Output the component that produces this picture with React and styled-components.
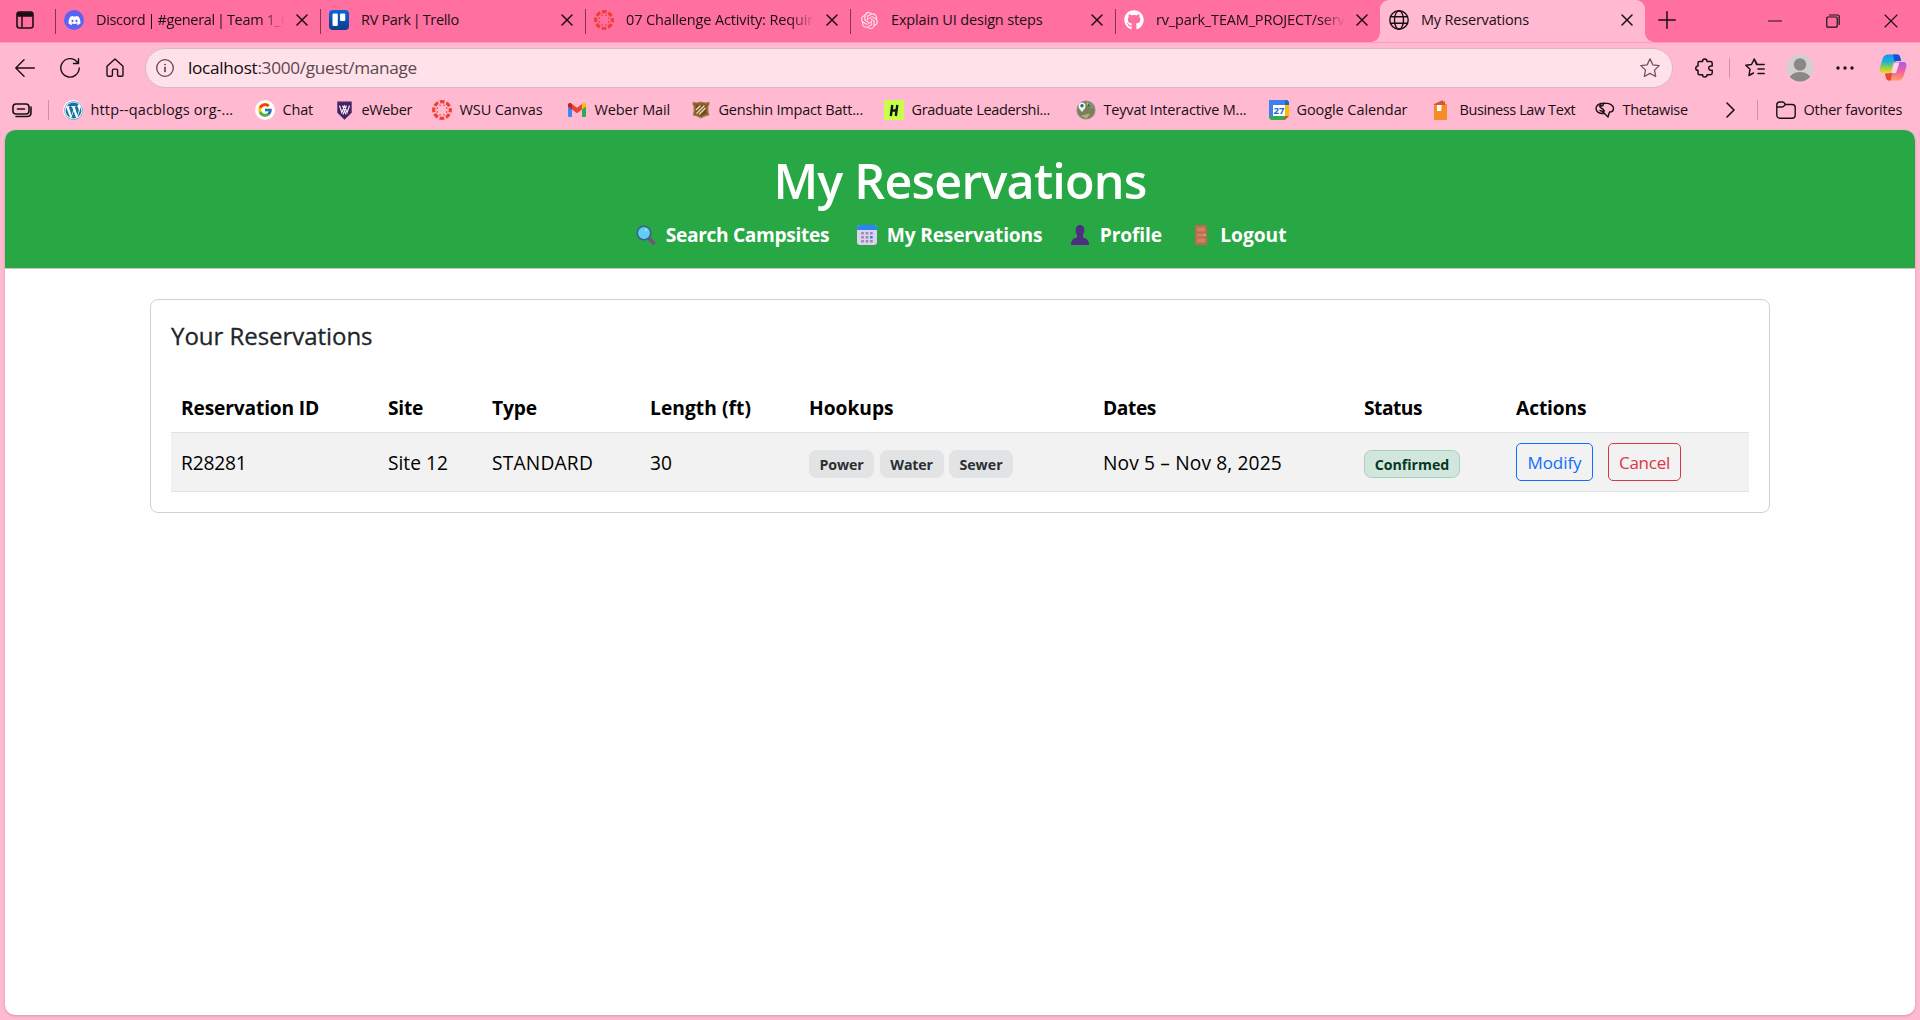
import React from "react";
import styled, { createGlobalStyle, css } from "styled-components";
import { FaDiscord, FaGithub, FaWordpress } from "react-icons/fa";
import { FcGoogle } from "react-icons/fc";
import { SiOpenai } from "react-icons/si";

const Global = createGlobalStyle`
  *, *::before, *::after { box-sizing: border-box; }
  body { margin: 0; background: #ffbad2; font-family: "Open Sans", "Noto Sans", sans-serif; overflow: hidden; }
  button { font-family: inherit; }
`;

const Window = styled.div`
  width: 1920px; height: 1020px; display: flex; flex-direction: column; background: #ffbad2; color: #1a0f14;
`;
const Label = styled.span`
  white-space: nowrap; letter-spacing: ${(p) => p.$ls || 0}px;
`;
const Pipe = styled.span`margin: 0 -1.2px;`;
const TabStrip = styled.div`
  height: 42px; display: flex; align-items: flex-start; background: #ff6fa0; font-size: 14.5px;
`;
const StripIcon = styled.div`
  width: ${(p) => p.$w}px; height: 40px; display: flex; align-items: center; justify-content: center;
`;
const Tab = styled.div`
  width: 265px; height: 40px; display: flex; align-items: center; padding-left: 8px;
  border-left: 1px solid transparent; position: relative;
  ${(p) => p.$divider && css`&::before { content: ""; position: absolute; left: -1px; top: 9px; width: 1px; height: 25px; background: #7d3550; }`}
  ${(p) => p.$active && css`
    height: 42px; padding-bottom: 2px; background: #ffbad2; border-radius: 9px 9px 0 0;
    &::before, &::after { content: ""; position: absolute; bottom: 0; width: 9px; height: 9px; }
    &::before { left: -10px; background: radial-gradient(circle at 0 0, #ff6fa0 8.5px, #ffbad2 9px); }
    &::after { right: -9px; background: radial-gradient(circle at 100% 0, #ff6fa0 8.5px, #ffbad2 9px); }
  `}
`;
const TabText = styled.div`
  width: 190px; margin-left: 12px; overflow: hidden; line-height: 24px;
  ${(p) => p.$fade && css`mask-image: linear-gradient(to right, #000 164px, transparent 189px);`}
`;
const Close = styled.div`margin-left: 9.5px; display: flex;`;
const Controls = styled.div`margin-left: auto; display: flex; align-items: center; height: 42px;`;

const Toolbar = styled.div`
  height: 52px; display: flex; align-items: center; padding-bottom: 2px; border-top: 1px solid #ff9dbe;
`;
const Slot = styled.div`
  width: ${(p) => p.$w}px; padding-left: ${(p) => p.$pad || 0}px; flex: none; display: flex; align-items: center; justify-content: center;
`;
const AddressBar = styled.div`
  width: 1528px; height: 40px; flex: none; border-radius: 20px; border: 1px solid #d9b8c3; background: #ffe1ea;
  display: flex; align-items: center; padding: 0 12px 0 10px; font-size: 17.2px; color: #5b4850;
  b { font-weight: 400; color: #120a0d; }
`;
const Url = styled.div`flex: 1; margin-left: 14px;`;
const Rule = styled.div`width: 1px; height: 20px; background: #cf91a7;`;

const Bookmarks = styled.div`
  height: 36px; display: flex; align-items: flex-start; font-size: 14.5px;
`;
const Bookmark = styled.div`
  width: ${(p) => p.$w}px; height: 32px; flex: none; display: flex; align-items: center; gap: 7.5px; line-height: 24px;
`;
const Fav = styled.span`width: 20px; height: 20px; flex: none; display: flex; align-items: center; justify-content: center;`;
const DiscordDisc = styled(Fav)`border-radius: 50%; background: #5865f2; color: #fff;`;
const WhiteDisc = styled(Fav)`border-radius: 50%; background: #fff;`;

const Page = styled.main`
  height: 885px; margin: 0 5px; border-radius: 10px; overflow: hidden; background: #fff; box-shadow: 0 1px 3px #d890aa;
`;
const Header = styled.header`
  height: 139px; padding-top: 20px; background: #28a745; border-bottom: 1px solid #c5c9c6; color: #fff;
  display: flex; flex-direction: column; align-items: center;
`;
const Title = styled.h1`margin: 0 0 10px; font-size: 48.5px; font-weight: 600; line-height: 60px;`;
const Nav = styled.nav`display: flex; align-items: center; height: 30px; padding-left: 2px; font-size: 19.2px; font-weight: 700;`;
const NavItem = styled.a`width: ${(p) => p.$w}px; display: flex; align-items: center; gap: 7px; line-height: 30px;`;
const Emoji = styled.span`width: 25px; height: 20px; display: flex; justify-content: center;`;

const Card = styled.section`
  margin: 30px 145px 0; height: 214px; padding: 21px 20px 20px; border: 1px solid #d0d1d3; border-radius: 8px; background: #fff;
`;
const CardTitle = styled.h2`
  margin: 0 0 31px; font-size: 24px; font-weight: 500; line-height: 30px; color: #212529; -webkit-text-stroke: 0.3px #212529;
`;
const Row = styled.div`
  display: grid; grid-template-columns: 207px 104px 158px 159px 294px 261px 152px 1fr; align-items: center;
  height: ${(p) => (p.$head ? 51 : 59)}px; font-size: 19.2px; color: #000; border-bottom: 1px solid #dee2e6;
  font-weight: ${(p) => (p.$head ? 700 : 400)}; background: ${(p) => (p.$head ? "#fff" : "#f2f2f2")};
`;
const Cell = styled.div`padding-left: 10px; display: flex; align-items: center;`;
const Badge = styled.span`
  width: ${(p) => p.$w}px; height: 28px; margin: 4px 5.5px 0 0; display: flex; align-items: center; justify-content: center;
  border-radius: 7.5px; font-size: 14.2px; font-weight: 700;
  background: ${(p) => (p.$ok ? "#d1e7dd" : "#e2e3e5")}; color: ${(p) => (p.$ok ? "#0a3622" : "#2b2f32")};
  border: 1px solid ${(p) => (p.$ok ? "#a3cfbb" : "#e2e3e5")};
`;
const Action = styled.button`
  width: ${(p) => p.$w}px; height: 38px; padding: 0; margin-right: 15px; border-radius: 5px; background: transparent;
  font-size: 17px; color: ${(p) => p.$c}; border: 1px solid ${(p) => p.$c};
`;

const T = ({ ls, children }) => <Label $ls={ls}>{children}</Label>;

const TabTitle = ({ text, ls }) => (
  <T ls={ls}>
    {text.split("|").map((part, i) => (
      <React.Fragment key={i}>{i > 0 && <Pipe>|</Pipe>}{part}</React.Fragment>
    ))}
  </T>
);

const Line = ({ w = 20, h = 20, vw = w, vh = h, s = 1.4, children, ...r }) => (
  <svg width={w} height={h} viewBox={`0 0 ${vw} ${vh}`} fill="none" stroke="#1a0f14" strokeWidth={s} strokeLinecap="round" strokeLinejoin="round" {...r}>{children}</svg>
);
const X = () => <Line w={12} h={12} s={1.5}><path d="M1 1l10 10M11 1L1 11" /></Line>;

const Canvas = () => (
  <svg width="20" height="20" viewBox="0 0 20 20">
    <circle cx="10" cy="10" r="8.3" fill="none" stroke="#ef3e33" strokeWidth="3.2" strokeDasharray="4.7 1.82" strokeDashoffset="2.35" />
    {[0, 45, 90, 135, 180, 225, 270, 315].map((a) => (
      <circle key={a} cx="10" cy="4.9" r="0.8" fill="#ef3e33" transform={`rotate(${a + 22.5} 10 10)`} />
    ))}
  </svg>
);
const Trello = () => (
  <svg width="20" height="20"><defs><linearGradient id="tr" x2="0" y2="1"><stop stopColor="#0b66d8" /><stop offset="1" stopColor="#0a3d8c" /></linearGradient></defs>
    <rect width="20" height="20" rx="4" fill="url(#tr)" /><rect x="3.5" y="3.5" width="5.3" height="12.5" rx="1.2" fill="#fff" /><rect x="11" y="3.5" width="5.3" height="7.5" rx="1.2" fill="#fff" /></svg>
);
const Gmail = () => (
  <svg width="18" height="14" viewBox="0 0 18 14"><path d="M0 2v10.7C0 13.4.6 14 1.3 14H4V6z" fill="#4285f4" /><path d="M14 6v8h2.7c.7 0 1.3-.6 1.3-1.3V2z" fill="#34a853" /><path d="M14 1v5.5L18 3.5V2c0-1.9-2.2-2.4-3.3-1.5z" fill="#fbbc04" /><path d="M4 6.5V1l5 3.8L14 1v5.5l-5 3.8z" fill="#ea4335" /><path d="M0 2v1.5l4 3V1L3.3.5C2.2-.4 0 .1 0 2z" fill="#c5221f" /></svg>
);
const Weber = () => (
  <svg width="15" height="19" viewBox="0 0 15 19"><path d="M.5.8h14v11L7.5 18.5.5 11.8z" fill="#452060" stroke="#6e4b86" strokeWidth=".8" /><path d="M2.5 4.5l2.3 7L7.5 5l2.6 6.500 2.400-7M5.500 4.500l3.500 9M9.500 4.500L6 13.500" stroke="#f3e9f4" strokeWidth="1.2" fill="none" /></svg>
);
const Shield = () => (
  <svg width="18" height="18" viewBox="0 0 18 18"><path d="M1 1l3 1 5-1 5 1 3-1v3l-1 1v6l1 3-4 1-4 2-4-2-4-1 1-3V5L1 4z" fill="#8a5f2c" stroke="#a9834f" /><path d="M4 4h10v8l-5 3-5-3z" fill="#6f4a20" /><path d="M4.500 12.500l8-8m-5.500 9l6.500-6.500M4 9l4.500-4.500" stroke="#f2dfb2" strokeWidth="1.4" /></svg>
);
const HIcon = () => (
  <svg width="20" height="20"><rect width="20" height="20" fill="#c9ff4a" /><path d="M8.3 5L6.8 16M13.3 5l-1.500 11M7.200 10.500h5.300" stroke="#101814" strokeWidth="2.4" fill="none" /></svg>
);
const Teyvat = () => (
  <svg width="20" height="20" viewBox="0 0 20 20"><circle cx="10" cy="10" r="9" fill="#7c8058" stroke="#8b8d86" strokeWidth="1.2" /><path d="M11 2c3 1 5 3 6 6l-3-1-4-3zM5 15c4 1 6-2 9-1l-3 4c-3 0-4-1-6-3z" fill="#b3ae7a" /><path d="M12 3l4 4-4-1z" fill="#20717c" /><path d="M6 12C3.500 9 2.500 8 2.500 6a3.500 3.500 0 017 0c0 2-1 3-3.500 6z" fill="#f3f7f5" /><circle cx="6" cy="5.7" r="1.7" fill="#20717c" /></svg>
);
const Calendar = () => (
  <svg width="20" height="20" fontFamily="Open Sans, sans-serif"><path d="M0 0h18l2 2v3H4v11H0z" fill="#3f7fee" /><path d="M15 5h5v11h-5z" fill="#fbbc04" /><path d="M0 16h16v4H2l-2-2z" fill="#34a853" /><path d="M16 16h4l-4 4z" fill="#ea4335" /><path d="M16 0h2l2 2v3h-4z" fill="#1a66cf" /><path d="M4 5h12v11H4z" fill="#fff" /><text x="10" y="14" textAnchor="middle" fontSize="9.5" fontWeight="700" fill="#1a66cf">27</text></svg>
);
const Book = () => (
  <svg width="20" height="20"><path d="M2 4h13v16H2z" fill="#f98b26" /><path d="M5 4h5l-1 7H5z" fill="#fff" /><path d="M2 4l9-4v2l2-1v4H2z" fill="#d9542c" /></svg>
);
const Brain = () => (
  <Line w={20} h={16} s={1.4}><path d="M1 6.500C1 3.500 4 1 9.500 1s9 2.500 9 5.200S17 10 14.500 10l-1.500 5-3.500-3.500C4 12 1 9.500 1 6.500zM9.500 1C7 2 9 4.500 6.500 4S4.500 5.500 7 6.500s1 2.500 2.500 2.500M5 8.500c1.500 0 3 1 4.500 3M4.500 4l1.500-1" /></Line>
);
const Copilot = () => (
  <svg width="28" height="27" viewBox="0 0 28 27"><defs>
    <linearGradient id="ca" x2="0" y2="1"><stop stopColor="#1790f0" /><stop offset=".4" stopColor="#22b3cf" /><stop offset=".7" stopColor="#8fd04a" /><stop offset="1" stopColor="#ffd21f" /></linearGradient>
    <linearGradient id="cb" x2="0" y2="1"><stop stopColor="#a65cf0" /><stop offset=".5" stopColor="#f2609c" /><stop offset="1" stopColor="#ffa063" /></linearGradient></defs>
    <path d="M14 .5h4c2.500 0 2.800 1.500 3.500 4L22 7h-4c-2.500 0-3.500 1.500-4 3.500L13 15l-1.500 4H4C1 19 0 17 .8 14L3.500 5C4.500 2 6 .5 9 .5z" fill="url(#ca)" />
    <path d="M14 .5h4c2.500 0 2.800 1.500 3.500 4L22 7h-4c-1 0-2 .3-2.500 1z" fill="#1750cf" />
    <path d="M14 26.500h-4c-2 0-2.700-1.200-3.200-3.500L6 19.500h3.500c2 0 3.500-1.500 4-3.500L16 8h8c3 0 4 2 3.300 5l-2.600 8.500c-1 3.500-2.700 5-5.700 5z" fill="url(#cb)" />
    <path d="M12 26.500h-2c-2 0-2.700-1.200-3.200-3.500L6 19.500h3.500c1.500 0 2.700-.8 3.500-2z" fill="#e8492f" />
    <path d="M16.500 8.500h4L17 19h-5l2.300-7c.6-2 1-3 2.200-3.500z" fill="#ffd7e5" /></svg>
);
const dots = [4.2, 8.6, 13];
const MonthGrid = () => (
  <svg width="20" height="20">
    <rect width="20" height="20" rx="3" fill="#ded2f0" />
    <path d="M0 5V3a3 3 0 013-3h14a3 3 0 013 3v2z" fill="#2a86f7" />
    {[7, 11, 15].map((y) => dots.map((x) => (
      <rect key={`${x}-${y}`} x={x} y={y} width="2.7" height="2.5" fill={x === 13 && y === 11 ? "#2a86f7" : "#9a8cab"} />
    )))}
  </svg>
);

const tabs = [
  ["Discord | #general | Team 1_G", -0.33, <DiscordDisc><FaDiscord size={13} /></DiscordDisc>, true],
  ["RV Park | Trello", -0.32, <Trello />],
  ["07 Challenge Activity: Requir", -0.13, <Canvas />, true],
  ["Explain UI design steps", -0.16, <Fav><SiOpenai size={17} color="#ffe6ef" /></Fav>],
  ["rv_park_TEAM_PROJECT/serv", -0.16, <FaGithub size={20} color="#fff" />, true],
  ["My Reservations", -0.19, <Line s={1.4}><circle cx="10" cy="10" r="9.2" /><ellipse cx="10" cy="10" rx="4.5" ry="9.2" /><path d="M1.5 6.7h17M1.5 13.3h17" /></Line>],
];
const bookmarks = [
  ["http--qacblogs org-...", 0.14, 192, <WhiteDisc><FaWordpress size={19} color="#1673a3" /></WhiteDisc>],
  ["Chat", -0.2, 79, <WhiteDisc><FcGoogle size={16} /></WhiteDisc>],
  ["eWeber", -0.35, 98, <Fav><Weber /></Fav>],
  ["WSU Canvas", -0.1, 135, <Canvas />],
  ["Weber Mail", -0.1, 124, <Fav><Gmail /></Fav>],
  ["Genshin Impact Batt...", -0.21, 193, <Fav><Shield /></Fav>],
  ["Graduate Leadershi...", -0.31, 192, <HIcon />],
  ["Teyvat Interactive M...", -0.19, 193, <Teyvat />],
  ["Google Calendar", -0.08, 163, <Calendar />],
  ["Business Law Text", -0.42, 163, <Book />],
  ["Thetawise", -0.33, 123, <Brain />],
];
const nav = [
  ["Search Campsites", -0.35, 221, <svg width="20" height="20" viewBox="0 0 20 20"><path d="M13.500 14l4 4" stroke="#7d4b86" strokeWidth="3.6" strokeLinecap="round" /><circle cx="8" cy="8" r="6.8" fill="#62cdf2" stroke="#35618f" strokeWidth="1.6" /><circle cx="10" cy="5" r="1" fill="#c9efff" /></svg>],
  ["My Reservations", -0.18, 213, <MonthGrid />],
  ["Profile", -0.13, 120.5, <svg width="20" height="20"><path d="M1 20c0-5 3-7 6-7.500V10C4.800 7 5 0 10 0s5.200 7 3 10v2.500c3 .5 6 2.500 6 7.500z" fill="#4f2d80" /></svg>],
  ["Logout", -0.02, 100, <svg width="12" height="20"><rect width="12" height="20" rx="1" fill="#b86c50" /><path d="M2 2.500h8v4H2zM2 8.500h8v3H2zM2 13.500h8v4H2z" fill="#cf8161" /><circle cx="10" cy="10" r="1" fill="#f3b13f" /></svg>],
];
const columns = [
  ["Reservation ID", -0.16], ["Site", -0.25], ["Type", -0.1], ["Length (ft)", 0.06],
  ["Hookups", 0], ["Dates", -0.4], ["Status", -0.5], ["Actions", -0.11],
];

export default function App() {
  return (
    <Window>
      <Global />
      <TabStrip>
        <StripIcon $w={55}><Line w={18} h={18} s={1.6} style={{ marginLeft: -5 }}><rect x="1" y="1" width="16" height="16" rx="2.5" /><path d="M6 5v11" strokeWidth="1.5" /><path d="M2 2h14v3H2z" fill="#1a0f14" /></Line></StripIcon>
        {tabs.map(([t, ls, icon, fade], i) => (
          <Tab key={t} $divider={i < 5} $active={i === 5}>
            {icon}<TabText $fade={fade}><TabTitle text={t} ls={ls} /></TabText><Close><X /></Close>
          </Tab>
        ))}
        <StripIcon $w={44}><Line w={18} h={18} s={1.5}><path d="M9 .8v16.400M.8 9h16.400" /></Line></StripIcon>
        <Controls>
          <Slot $w={58}><Line w={14} h={2} s={1.2}><path d="M.6 1h12.800" /></Line></Slot>
          <Slot $w={58}><Line w={14} h={14} s={1.2}><rect x=".8" y="3" width="10.4" height="10.2" rx="1" /><path d="M3.500 1h8.200c1 0 1.500.5 1.500 1.500v8" /></Line></Slot>
          <Slot $w={58}><Line w={14} h={14} s={1.1}><path d="M1 1l12 12M13 1L1 13" /></Line></Slot>
        </Controls>
      </TabStrip>
      <Toolbar>
        <Slot $w={50}><Line w={20} h={18}><path d="M9 .8L.8 9 9 17.200M1 9h18.300" /></Line></Slot>
        <Slot $w={40}><Line><path d="M17.500 4.500A9.200 9.200 0 1019.200 10M18.500.8v4.700h-5" /></Line></Slot>
        <Slot $w={50}><Line w={18} h={19}><path d="M1 8.200L9 1l8 7.200V17c0 .8-.4 1.200-1.200 1.200h-3c-.8 0-1.200-.4-1.200-1.200v-4.500c0-.9-.5-1.400-1.400-1.400H7.800c-.9 0-1.400.5-1.400 1.400V17c0 .8-.4 1.200-1.200 1.200h-3C1.400 18.200 1 17.800 1 17z" /></Line></Slot>
        <Slot $w={5} />
        <AddressBar>
          <Line w={18} h={18} s={1.3} stroke="#5b4850"><circle cx="9" cy="9" r="8.3" /><path d="M9 8.300v4.200" strokeWidth="1.7" /><circle cx="9" cy="5.5" r=".5" strokeWidth="1" /></Line>
          <Url><T ls={-0.29}><b>localhost</b>:3000/guest/manage</T></Url>
          <Line s={1.3} stroke="#6b5660"><path d="M10 .9l2.800 5.900 6.400.8-4.700 4.500 1.200 6.400L10 15.400l-5.700 3.100 1.200-6.400L.8 7.600l6.400-.8z" /></Line>
        </AddressBar>
        <Slot $w={56} $pad={6}><Line w={19} h={20} s={1.5}><path d="M4.500 3.500h3C7.500 0 12 0 12 3.500h3.500c1 0 1.700.7 1.700 1.700V8c-4.700-.8-4.700 5 0 4.200v2.900c0 1-.7 1.700-1.700 1.700H12c0 3-4.500 3-4.500 0h-3c-1 0-1.500-.6-1.500-1.500v-3C0 12.300 0 8 3 8V5c0-1 .5-1.500 1.500-1.500" /></Line></Slot>
        <Rule />
        <Slot $w={49}><Line w={20} h={19} s={1.5}><path d="M11.500 6.500L9.300 1 6.500 6.500.8 7.200l4.200 4-1 6.300L8.500 15M9.300 1l3 5.500h6.900M13 11h6.200M13 15.500h6.200" /></Line></Slot>
        <Slot $w={42}><svg width="28" height="28"><defs><clipPath id="av"><circle cx="14" cy="14" r="13.5" /></clipPath></defs><circle cx="14" cy="14" r="13.5" fill="#d2d0ce" /><g clipPath="url(#av)" fill="#8a8886"><circle cx="14" cy="10.5" r="6.2" /><ellipse cx="14" cy="26" rx="11" ry="8" /></g></svg></Slot>
        <Slot $w={47}><svg width="18" height="4" fill="#1a0f14"><circle cx="2" cy="2" r="1.7" /><circle cx="9" cy="2" r="1.7" /><circle cx="16" cy="2" r="1.7" /></svg></Slot>
        <Slot $w={49}><Copilot /></Slot>
      </Toolbar>
      <Bookmarks>
        <Bookmark $w={48}><Slot $w={44}><Line w={20} h={15} s={1.6}><rect x="1" y="1" width="16" height="10" rx="3" /><path d="M5.500 6h7M4 13.500h11c2.500 0 4-1.500 4-4V4" /></Line></Slot></Bookmark>
        <Bookmark $w={15}><Rule /></Bookmark>
        {bookmarks.map(([t, ls, bw, icon]) => (
          <Bookmark key={t} $w={bw}>{icon}<T ls={ls}>{t}</T></Bookmark>
        ))}
        <Bookmark $w={39}><Line w={24} h={16} s={1.6}><path d="M9 1l7 7-7 7" /></Line></Bookmark>
        <Bookmark $w={19}><Rule /></Bookmark>
        <Bookmark $w={144}><Line w={20} h={18}><path d="M.8 4c0-2 1-3 3-3h2.700c1 0 1.700.5 2.200 1.500L9.500 3.500H16c2 0 3.200 1 3.200 3V14c0 2-1.200 3.200-3.200 3.200H4C2 17.200.8 16 .8 14zM.8 6h4.700c1.500 0 2.500-.5 3-1.500l.7-1" /></Line><T ls={-0.22}>Other favorites</T></Bookmark>
      </Bookmarks>
      <Page>
        <Header>
          <Title><T ls={-0.83}>My Reservations</T></Title>
          <Nav>
            {nav.map(([t, ls, nw, icon]) => (
              <NavItem key={t} $w={nw}><Emoji>{icon}</Emoji><T ls={ls}>{t}</T></NavItem>
            ))}
          </Nav>
        </Header>
        <Card>
          <CardTitle><T ls={-0.04}>Your Reservations</T></CardTitle>
          <Row $head>
            {columns.map(([t, ls]) => <Cell key={t}><T ls={ls}>{t}</T></Cell>)}
          </Row>
          <Row>
            <Cell><T ls={-0.2}>R28281</T></Cell>
            <Cell><T>Site 12</T></Cell>
            <Cell><T ls={0.19}>STANDARD</T></Cell>
            <Cell><T>30</T></Cell>
            <Cell><Badge $w={65}><T ls={-0.1}>Power</T></Badge><Badge $w={64}><T ls={-0.2}>Water</T></Badge><Badge $w={64}><T>Sewer</T></Badge></Cell>
            <Cell><T ls={0.13}>Nov 5 – Nov 8, 2025</T></Cell>
            <Cell><Badge $w={96} $ok><T>Confirmed</T></Badge></Cell>
            <Cell><Action $w={77} $c="#0d6efd"><T ls={-0.08}>Modify</T></Action><Action $w={73} $c="#dc3545"><T ls={-0.25}>Cancel</T></Action></Cell>
          </Row>
        </Card>
      </Page>
    </Window>
  );
}
